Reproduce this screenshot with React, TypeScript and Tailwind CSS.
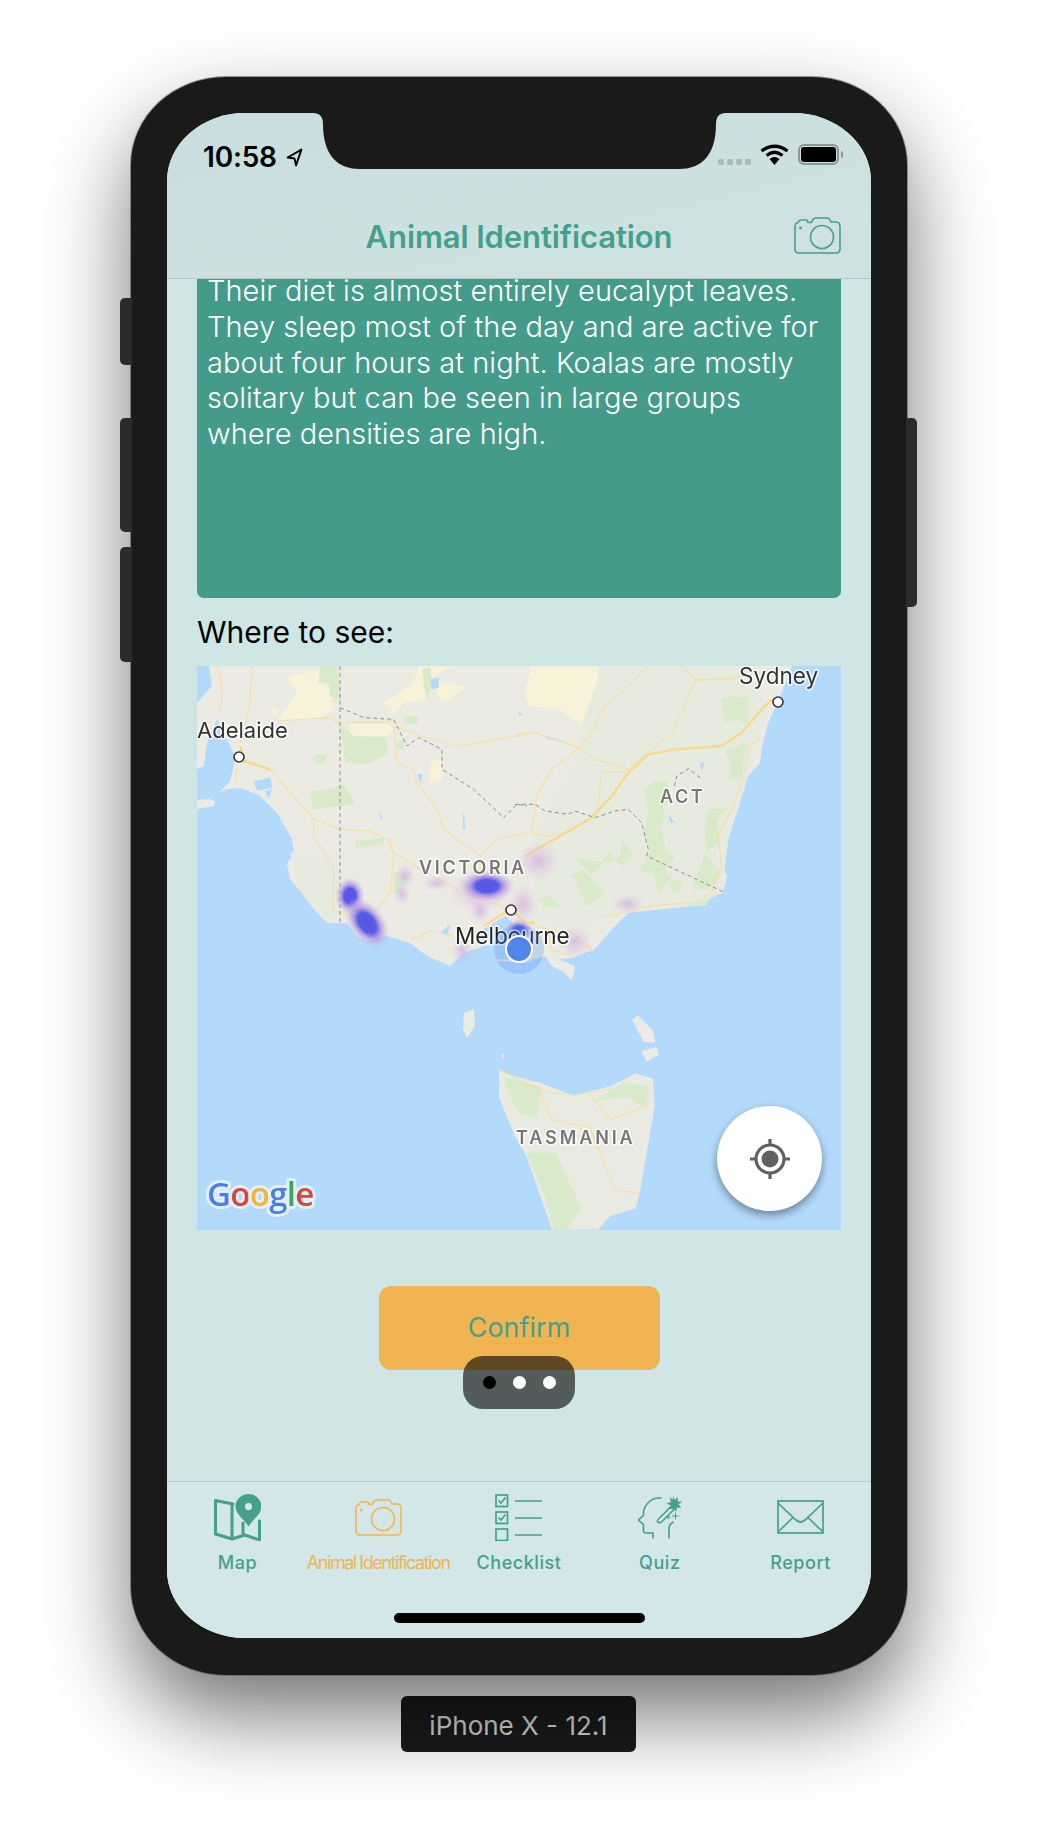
const teal = "#459f8d";

const z10 = (s: string) =>
  s.split(" ").map((p) => p.split(",").map((n) => Number(n) / 3).join(",")).join(" ");
const z11 = (s: string) =>
  s.split(" ").map((p) => { const [x, y] = p.split(",").map(Number); return `${318 + x / 3},${y / 3}`; }).join(" ");
const z2 = (s: string) =>
  s.split(" ").map((p) => { const [x, y] = p.split(",").map(Number); return `${(x - 17) / 2.376},${(y - 14) / 2.703}`; }).join(" ");

const land =
  "12,0 595,0 581,36 571,57 565,80 563,97 548,113 535,143 531,173 525,200 530,210 526,227 515,230 498,240 465,240 431,247 418,260 398,283 375,292 361,293 378,300 375,315 368,307 355,300 348,290 338,293 330,297 300,295 297,277 267,287 253,300 230,290 213,277 190,270 170,275 160,270 150,257 130,257 117,243 107,230 93,213 90,198 97,187 95,173 80,147 63,130 45,122 30,123 22,127 33,115 37,100 38,90 20,53 10,77 7,100 0,103 0,37 15,20";

const terrain = [
  z11("240,0 680,0 760,130 700,330 640,520 620,680 540,720 340,740 170,800 60,760 60,500 190,250"),
  z10("280,560 420,560 430,760 390,770 350,730 300,660"),
];

const greens = [
  z10("430,175 470,210 570,215 570,265 510,295 445,290"),
  z10("370,0 420,0 435,110 400,90 395,50 365,50"),
  z10("340,375 405,370 440,350 475,415 430,420 345,430"),
  z10("475,525 560,515 560,535 475,545"),
  z10("345,275 365,265 390,265 385,290 360,295"),
  z10("620,150 665,150 660,175 625,175"),
  z10("600,225 625,225 620,250 600,250"),
  z10("590,620 640,620 610,680 590,680"),
  z10("675,10 700,0 705,60 690,100 680,60"),
  z11("385,370 420,345 455,345 475,400 450,420 440,480 450,545 480,575 450,610 470,640 430,680 415,625 375,615 405,555 385,510 400,440"),
  z11("170,575 195,590 230,625 250,610 280,555 300,580 320,600 355,565 320,520 315,570 285,590"),
  z11("165,630 205,610 240,650 270,680 220,720 195,680 190,650"),
  z11("630,255 695,230 685,285 680,340 640,340 650,300"),
  z11("620,100 660,90 700,95 700,180 670,160 630,170"),
  z11("580,430 640,425 605,460 610,530 570,560 590,590 620,620 585,670 530,670 555,600 575,555 570,490"),
  z11("510,720 590,695 570,720"),
  z11("470,640 505,645 490,680 465,670"),
  z11("70,700 100,685 135,725 90,720"),
  z2("745,1125 835,1150 825,1235 785,1225 765,1190"),
  z2("800,1330 870,1330 930,1480 895,1537 865,1537 845,1450"),
  z2("960,1190 1030,1140 1090,1150 1085,1210 1040,1180"),
];

const yellows = [
  z10("270,35 370,10 365,50 395,60 410,130 350,165 290,160 240,165 300,80"),
  z10("215,120 245,130 235,150"),
  z10("560,110 640,60 670,0 760,0 700,40 690,100 620,110 590,140"),
  z10("720,50 810,60 750,105 720,90"),
  z10("700,290 735,275 735,340 695,350"),
  z10("455,170 570,170 590,190 570,210 465,210"),
  z11("50,0 250,0 250,40 200,175 130,130 40,120 30,80"),
];

const waters = [
  z10("860,790 925,750 960,780 960,880 900,880 890,830 840,820"),
  z10("730,800 760,775 750,810"),
  z10("170,345 220,335 225,365 180,375"),
  z10("205,375 225,370 215,400"),
  z10("800,430 805,490 797,490"),
  z10("545,435 558,460 550,458"),
  z10("660,325 675,325 672,355"),
  z10("700,40 725,35 725,65 705,70"),
  z11("80,205 155,228 100,220"),
  z11("460,440 478,470 465,470"),
  z11("555,290 568,292 560,315"),
  z11("10,135 25,148 12,148"),
];

const thinRoads = [
  z10("220,310 350,460 430,490 520,495 570,520 590,560 720,640 800,680 940,730"),
  z10("350,460 350,510 410,610 408,735 470,750"),
  z10("590,560 580,680 530,745"),
  z10("580,525 590,560"),
  z10("640,820 700,795 770,810"),
  z10("60,0 75,60 72,130"),
  z10("165,0 160,100 145,180 130,230"),
  z10("240,165 400,155 430,170 560,170 590,160 600,290 650,310 660,350 720,430 740,490 850,570"),
  z10("590,180 670,210 780,240 990,205"),
  z10("990,500 900,520 850,570 850,640 880,680"),
  z10("120,300 115,340"),
  z11("0,205 60,200 190,245 240,280 340,310 470,200 540,45 680,30"),
  z11("190,245 225,210 265,125 330,70 400,0"),
  z11("500,0 540,40 680,40"),
  z11("110,310 65,390 50,500 90,510 120,505"),
  z11("340,315 260,320 245,450"),
  z11("190,245 110,310"),
  z11("0,760 100,790 170,800 235,855"),
  z11("260,755 340,735 440,715 540,710 590,680 620,600 610,505 650,430 690,320 700,240 740,215"),
  z11("100,790 110,850 170,870"),
  z2("735,1105 830,1160 910,1175 1000,1160"),
  z2("830,1160 860,1240 950,1260 1010,1430 1070,1440"),
  z2("950,1170 1000,1240 1090,1200"),
];

const mainRoads = [
  z10("130,240 140,285 220,310"),
  z11("30,570 170,490 230,455 290,390 340,320 400,265 480,250 620,240 680,200 740,130 770,100"),
  z11("0,740 30,770 60,770"),
  z10("860,780 940,730"),
];

const border1 = z10("430,125 500,155 590,160 630,240 665,215 735,250 735,310 830,370 920,455 960,415 990,420");
const border2 = z11("0,415 60,415 90,435 160,445 180,435 240,455 300,435 340,430 380,470 400,550 395,570 630,680");
const border3 = z11("478,360 485,330 520,308 555,335");

function MapDrawing() {
  return (
    <svg viewBox="0 0 644 564" className="block h-full w-full blur-[0.5px]" fontFamily="Inter, sans-serif">
      <defs>
        <radialGradient id="hot">
          <stop offset="0" stopColor="#5256e6" />
          <stop offset="0.4" stopColor="#5a5ae6" />
          <stop offset="0.62" stopColor="#a98fe4" stopOpacity="0.75" />
          <stop offset="1" stopColor="#dcbce6" stopOpacity="0" />
        </radialGradient>
        <radialGradient id="pale">
          <stop offset="0" stopColor="#cda6e2" stopOpacity="0.65" />
          <stop offset="1" stopColor="#dcbce6" stopOpacity="0" />
        </radialGradient>
      </defs>
      <rect width="644" height="564" fill="#b3d9fb" />
      <polygon points={land} fill="#ebebe3" />
      <polygon points="0,134 12,133 18,135 17,140 0,143" fill="#ebebe3" />
      <polygon points="267,347 277,343 278,360 270,372 266,363" fill="#e8efe2" />
      <polygon points="435,354 441,349 456,365 458,377 447,376" fill="#ebebe3" />
      <polygon points="445,385 460,381 462,389 449,396" fill="#ebebe3" />
      <polygon points="304,388 308,389 307,393" fill="#ebebe3" />
      <polygon
        points={z2("735,1105 760,1120 830,1140 910,1175 1000,1150 1060,1115 1100,1130 1105,1200 1090,1300 1070,1430 1060,1480 1000,1500 970,1537 860,1537 840,1470 800,1340 770,1280 735,1180")}
        fill="#e9ebe2"
      />
      {terrain.map((p, i) => <polygon key={i} points={p} fill="#e7eadf" />)}
      {yellows.map((p, i) => <polygon key={i} points={p} fill="#f8f2d8" />)}
      {greens.map((p, i) => <polygon key={i} points={p} fill="#d8eaca" />)}
      {waters.map((p, i) => <polygon key={i} points={p} fill="#b3d9fb" />)}
      <g fill="none" strokeLinejoin="round">
        {thinRoads.map((p, i) => <polyline key={i} points={p} stroke="#f5dfa8" strokeWidth="1.2" />)}
        {mainRoads.map((p, i) => <polyline key={i} points={p} stroke="#f8d987" strokeWidth="2.4" />)}
        <line x1="143" y1="0" x2="143" y2="257" stroke="#8f8f8f" strokeWidth="1" strokeDasharray="4 3" />
        {[border1, border2, border3].map((p, i) => (
          <polyline key={i} points={p} stroke="#8f8f8f" strokeWidth="1" strokeDasharray="4 3" />
        ))}
      </g>
      <ellipse cx="153" cy="230" rx="15" ry="19" fill="url(#hot)" />
      <ellipse cx="170" cy="257" rx="18" ry="29" transform="rotate(-38 170 257)" fill="url(#hot)" />
      <ellipse cx="283" cy="226" rx="32" ry="22" fill="url(#pale)" />
      <ellipse cx="290" cy="220" rx="28" ry="16" fill="url(#hot)" />
      <ellipse cx="283" cy="245" rx="11" ry="13" fill="url(#pale)" />
      <ellipse cx="208" cy="210" rx="10" ry="13" fill="url(#pale)" />
      <ellipse cx="205" cy="228" rx="9" ry="11" fill="url(#pale)" />
      <ellipse cx="240" cy="217" rx="15" ry="8" fill="url(#pale)" />
      <ellipse cx="341" cy="195" rx="22" ry="20" fill="url(#pale)" />
      <ellipse cx="326" cy="238" rx="15" ry="20" fill="url(#pale)" />
      <ellipse cx="431" cy="238" rx="17" ry="10" fill="url(#pale)" />
      <ellipse cx="378" cy="276" rx="17" ry="17" fill="url(#pale)" />
      <ellipse cx="265" cy="285" rx="12" ry="15" fill="url(#pale)" />
      <ellipse cx="322" cy="265" rx="14" ry="12" fill="url(#hot)" />

      <circle cx="42" cy="91" r="5" fill="#fff" stroke="#333" strokeWidth="1.6" />
      <circle cx="314" cy="244" r="5" fill="#fff" stroke="#333" strokeWidth="1.6" />
      <circle cx="581" cy="36" r="5" fill="#fff" stroke="#333" strokeWidth="1.6" />
      <g stroke="#ffffff" strokeOpacity="0.8" strokeWidth="3" paintOrder="stroke" strokeLinejoin="round">
        <text x="0" y="72" fontSize="22" fill="#333">Adelaide</text>
        <text x="542" y="18" fontSize="22.5" fill="#333">Sydney</text>
        <text x="258" y="278" fontSize="22.5" fill="#222">Melbourne</text>
        <text x="222" y="208" fontSize="18" fontWeight="600" letterSpacing="2.7" fill="#777">VICTORIA</text>
        <text x="463" y="137" fontSize="18" fontWeight="600" letterSpacing="2.6" fill="#777">ACT</text>
        <text x="319" y="478" fontSize="18" fontWeight="600" letterSpacing="2.9" fill="#777">TASMANIA</text>
      </g>
      <circle cx="322" cy="283" r="25" fill="#4a86ea" fillOpacity="0.25" />
      <circle cx="322" cy="283" r="13" fill="#4f86ec" stroke="#fff" strokeWidth="2" />
      <text
        x="10"
        y="540"
        fontFamily="'Open Sans', sans-serif"
        fontSize="33"
        fontWeight="600"
        letterSpacing="-0.7"
        stroke="#e2f0fc"
        strokeWidth="6"
        paintOrder="stroke"
        strokeLinejoin="round"
      >
        <tspan fill="#4a7fe8">G</tspan>
        <tspan fill="#d9473a">o</tspan>
        <tspan fill="#f2b632">o</tspan>
        <tspan fill="#4a7fe8">g</tspan>
        <tspan fill="#3fa757">l</tspan>
        <tspan fill="#d9473a">e</tspan>
      </text>
    </svg>
  );
}

function CameraIcon({ color }: { color: string }) {
  return (
    <svg width="47" height="37" viewBox="0 0 47 37" fill="none" stroke={color} strokeWidth="1.6" strokeLinejoin="round">
      <path d="M1 10 Q1 6 4 5.5 L5 4 Q5.5 3 7 3 H12 Q13 3 13.5 4 L14 5.5 H17 L19 2.5 Q20 1 22 1 H33 Q35 1 36 3 L37 5 H42 Q46 5 46 10 V32 Q46 36 42 36 H5 Q1 36 1 32 Z" />
      <circle cx="28" cy="20" r="11.5" />
      <circle cx="6.5" cy="11" r="1.4" fill={color} stroke="none" />
    </svg>
  );
}

function MapIcon() {
  return (
    <svg width="47" height="47" viewBox="0 0 47 47" fill="none" stroke={teal} strokeWidth="3" strokeLinejoin="round" strokeLinecap="round">
      <path d="M19 10 L1.5 6.5 V40 L18 45 L31 41 L45.5 46 V27" />
      <path d="M18 11 V45" />
      <path d="M29 29 V41" />
      <path
        fillRule="evenodd"
        stroke="none"
        fill={teal}
        d="M34.5 0 C27.5 0 21.5 5.5 21.5 12.5 C21.5 20 29 24 34.5 32.5 C40 24 47.5 20 47.5 12.5 C47.5 5.5 41.5 0 34.5 0 Z M34.5 9 A3.6 3.6 0 1 1 34.5 16.2 A3.6 3.6 0 1 1 34.5 9 Z"
      />
    </svg>
  );
}

function ChecklistIcon() {
  return (
    <svg width="47" height="47" viewBox="0 0 47 47" fill="none" stroke={teal} strokeWidth="1.7">
      <rect x="1" y="1" width="11.5" height="11.5" />
      <rect x="1" y="18" width="11.5" height="11.5" />
      <rect x="1" y="35" width="11.5" height="11.5" />
      <path d="M3.5 6.5 L6 9 L10.5 3.5" />
      <path d="M3.5 23.5 L6 26 L10.5 20.5" />
      <path d="M20 7 H47 M20 24 H47 M20 41 H47" />
    </svg>
  );
}

function QuizIcon() {
  return (
    <svg width="44" height="44" viewBox="0 0 44 44" fill="none" stroke={teal} strokeWidth="1.6" strokeLinecap="round" strokeLinejoin="round">
      <path d="M23 3 Q15 2.5 11 7 Q5.5 12 5.5 18 V20.5 L0.5 25 L5.5 29.5 V36 Q5.5 38 8 38 H15 V43" />
      <path d="M31 43 V33 Q31 30 35 27" />
      <path d="M20.5 24 L33 11.5 L36 14.5 L23.5 27 Q21 28.5 19.5 27 Q19 25.5 20.5 24 Z" />
      <path stroke="none" fill={teal} d="M35 0.5 L36.6 5 L40 2 L39.5 6.5 L44 6.5 L40.5 9.5 L43.5 13 L39 12.5 L38 17 L35.5 13 L31.5 14.5 L33 10.5 L28.5 8.5 L33 7 L31.5 2.5 L35 4.5 Z" />
      <path strokeWidth="1" d="M30 20 V24 M28 22 H32 M37.5 18 V24 M34.5 21 H40.5" />
    </svg>
  );
}

function MailIcon() {
  return (
    <svg width="47" height="34" viewBox="0 0 47 34" fill="none" stroke={teal} strokeWidth="1.7">
      <rect x="1" y="1" width="45" height="32" />
      <path d="M1 3 L19 20 Q23.5 24 28 20 L46 3" />
      <path d="M1 32 L16 17.5 M46 32 L31 17.5" />
    </svg>
  );
}

function TabItem({ icon, label, active, tight }: { icon: React.ReactNode; label: string; active?: boolean; tight?: boolean }) {
  return (
    <div className="flex flex-col items-center pt-[11px]">
      <div className="flex h-[48px] items-center justify-center">{icon}</div>
      <span className={`mt-[10px] whitespace-nowrap text-[18px] leading-[24px] ${tight ? "tracking-[-1.45px]" : "tracking-[0.55px]"} ${active ? "text-[#f0b552]" : "font-medium text-[#459f8d]"}`}>
        {label}
      </span>
    </div>
  );
}

export default function App() {
  return (
    <div className="min-h-[1824px] bg-white pl-[131px] pt-[77px] font-['Inter','Liberation_Sans',sans-serif]">
      {/* device */}
      <div className="relative h-[1598px] w-[776px] rounded-[95px/88px] bg-[#1a1a1a] px-[36px] pb-[37px] pt-[36px] shadow-[0_0_0_1px_rgba(90,90,90,0.6),0_40px_85px_rgba(0,0,0,0.55)]">
        <div className="absolute left-[-11px] top-[221px] h-[67px] w-[12px] rounded-l-[5px] bg-[#2b2b2b]" />
        <div className="absolute left-[-11px] top-[341px] h-[114px] w-[12px] rounded-l-[5px] bg-[#2b2b2b]" />
        <div className="absolute left-[-11px] top-[470px] h-[115px] w-[12px] rounded-l-[5px] bg-[#2b2b2b]" />
        <div className="absolute right-[-10px] top-[341px] h-[189px] w-[11px] rounded-r-[5px] bg-[#2b2b2b]" />

        <div className="relative flex h-full w-[704px] flex-col overflow-hidden rounded-[78px/68px] bg-[#cfe6e4]">
          {/* notch */}
          <svg className="absolute left-[146px] top-0" width="413" height="56" viewBox="0 0 413 56" fill="#1a1a1a">
            <path d="M0 0 Q10 0 10 11 C10 43 25 56 47 56 H366 C388 56 403 43 403 11 Q403 0 413 0 Z" />
          </svg>

          {/* status + nav */}
          <div className="flex h-[166px] shrink-0 flex-col border-b border-[#b2c7c7] bg-gradient-to-br from-[#c9dede] to-[#cfe2e2]">
            <div className="flex h-[60px] items-start justify-between pl-[36px] pr-[28px] pt-[29px]">
              <div className="flex items-center gap-[9px]">
                <span className="text-[28px] font-semibold leading-[30px] tracking-[-0.2px] text-black">10:58</span>
                <svg width="17" height="19" viewBox="0 0 16 18" fill="none" stroke="#000" strokeWidth="1.8" strokeLinejoin="round">
                  <path d="M1.5 9 L14.5 1.5 L9.5 16.5 L8 10 Z" />
                </svg>
              </div>
              <div className="mt-[2px] flex items-center gap-[9px]">
                <div className="mt-[14px] flex gap-[3px]">
                  <span className="h-[6px] w-[6px] rounded-[2px] bg-[#aab9b9]" />
                  <span className="h-[6px] w-[6px] rounded-[2px] bg-[#aab9b9]" />
                  <span className="h-[6px] w-[6px] rounded-[2px] bg-[#aab9b9]" />
                  <span className="h-[6px] w-[6px] rounded-[2px] bg-[#aab9b9]" />
                </div>
                <svg width="29" height="21" viewBox="0 0 29 21" fill="none" stroke="#000" strokeWidth="3.2">
                  <path d="M1.5 7 Q14.5 -2.5 27.5 7" />
                  <path d="M6.5 11.5 Q14.5 5 22.5 11.5" />
                  <path stroke="none" fill="#000" d="M9.5 15 Q14.5 11 19.5 15 L14.5 21 Z" />
                </svg>
                <div className="flex items-center gap-[2px]">
                  <div className="h-[21px] w-[41px] rounded-[6px] border-2 border-[#8a9898] p-[1px]">
                    <div className="h-full w-full rounded-[3px] bg-black" />
                  </div>
                  <span className="h-[7px] w-[2px] rounded-r-[2px] bg-[#8a9898]" />
                </div>
              </div>
            </div>
            <div className="relative flex h-[105px] items-start justify-center pt-[43px]">
              <span className="text-[31px] font-semibold leading-[42px] tracking-[-0.1px] text-[#459f8d]">Animal Identification</span>
              <div className="absolute right-[30px] top-[44px]">
                <CameraIcon color="#459f8d" />
              </div>
            </div>
          </div>

          {/* scrolled content */}
          <div className="flex min-h-0 flex-1 flex-col px-[30px]">
            <div className="h-[319px] shrink-0 overflow-hidden rounded-b-[7px] bg-[#459b89] pl-[10px]">
              <p className="-mt-[6px] whitespace-nowrap text-[29px] font-light leading-[35.8px] tracking-[0.05px] text-white">
                Their diet is almost entirely eucalypt leaves.
                <br />
                They sleep most of the day and are active for
                <br />
                about four hours at night. Koalas are mostly
                <br />
                solitary but can be seen in large groups
                <br />
                where densities are high.
              </p>
            </div>
            <p className="mt-[15px] h-[53px] text-[30px] leading-[38px] text-black">Where to see:</p>
            <div className="relative h-[564px] w-[644px] shrink-0 overflow-hidden">
              <MapDrawing />
              <button className="absolute left-[520px] top-[440px] flex h-[105px] w-[105px] items-center justify-center rounded-full bg-white shadow-[0_4px_8px_rgba(0,0,0,0.4)]">
                <svg width="42" height="42" viewBox="0 0 42 42" fill="none" stroke="#616161">
                  <circle cx="21" cy="21" r="14" strokeWidth="3.2" />
                  <circle cx="21" cy="21" r="8.5" fill="#616161" stroke="none" />
                  <path strokeWidth="3.2" d="M21 1 V7 M21 35 V41 M1 21 H7 M35 21 H41" />
                </svg>
              </button>
            </div>
            <button className="mx-auto mt-[56px] flex h-[84px] w-[281px] shrink-0 items-center justify-center rounded-[12px] bg-[#f0b552] text-[27px] text-[#459f8d]">
              Confirm
            </button>
          </div>

          {/* dev menu pill */}
          <div className="absolute left-[296px] top-[1243px] flex h-[53px] w-[112px] items-center justify-center gap-[17px] rounded-[20px] bg-black/60">
            <span className="h-[13px] w-[13px] rounded-full bg-black" />
            <span className="h-[13px] w-[13px] rounded-full bg-white" />
            <span className="h-[13px] w-[13px] rounded-full bg-white" />
          </div>

          {/* tabs */}
          <div className="relative grid h-[157px] shrink-0 grid-cols-5 border-t border-[#b5cccb] bg-[#d3e7e8]">
            <TabItem icon={<MapIcon />} label="Map" />
            <TabItem icon={<CameraIcon color="#f0b552" />} label="Animal Identification" active tight />
            <TabItem icon={<ChecklistIcon />} label="Checklist" />
            <TabItem icon={<QuizIcon />} label="Quiz" />
            <TabItem icon={<MailIcon />} label="Report" />
            <div className="absolute bottom-[15px] left-[227px] h-[10px] w-[251px] rounded-full bg-black" />
          </div>
        </div>
      </div>

      <div className="ml-[270px] mt-[21px] flex h-[56px] w-[235px] items-center justify-center rounded-[6px] bg-[#1a1a1a] pt-[3px] text-[26px] text-[#dadada]">
        iPhone X - 12.1
      </div>
    </div>
  );
}
